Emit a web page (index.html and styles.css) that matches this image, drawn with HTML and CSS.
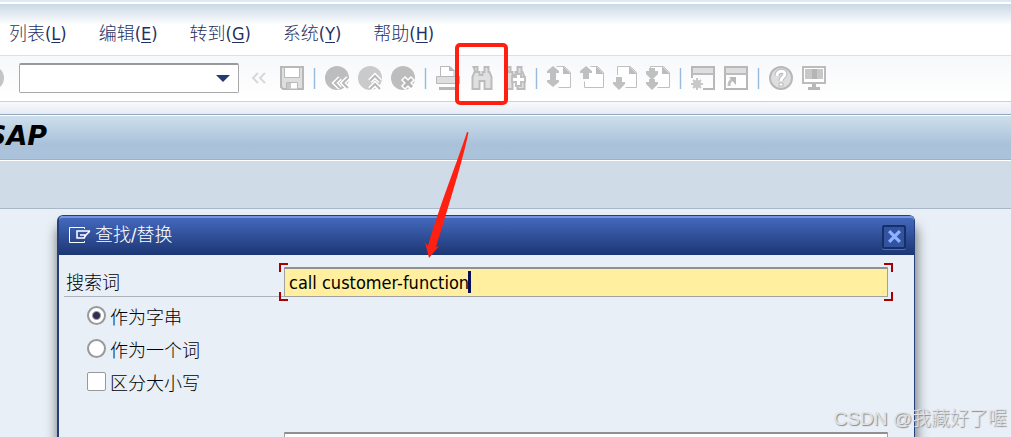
FILE: index.html
```
<!DOCTYPE html>
<html lang="zh-CN">
<head>
  <meta charset="UTF-8" />
  <meta name="viewport" content="width=device-width, initial-scale=1.0" />
  <title>SAP</title>
  <link rel="stylesheet" href="styles.css">
</head>
<body>
  <nav class="menu-bar">
    <a href="#">列表(<u>L</u>)</a>
    <a href="#">编辑(<u>E</u>)</a>
    <a href="#">转到(<u>G</u>)</a>
    <a href="#">系统(<u>Y</u>)</a>
    <a href="#">帮助(<u>H</u>)</a>
  </nav>

  <div class="toolbar">
    <button type="button" class="tool enter" aria-label="Enter">
      <svg viewBox="0 0 24 24"><circle cx="12" cy="12" r="12" fill="#c4c4c4"/></svg>
    </button>
    <div class="command">
      <select aria-label="Command"><option></option></select>
    </div>
    <button type="button" class="tool collapse" aria-label="Collapse">
      <svg viewBox="0 0 23 24"><path d="M10 7l-5 5 5 5M17 7l-5 5 5 5" fill="none" stroke="#d8d8d8" stroke-width="2"/></svg>
    </button>
    <button type="button" class="tool" aria-label="Save">
      <svg viewBox="0 0 24 24"><path d="M1 1h22v22H3l-2-2z" fill="#dedede" stroke="#b8b8b8" stroke-width="2"/><path d="M4.500 1.500h15v10h-15z" fill="#fff" stroke="#b8b8b8"/><path d="M6.500 16.500h11V23h-11z" fill="#fff" stroke="#b8b8b8"/><path d="M7 17h4v6H7z" fill="#c8c8c8"/></svg>
    </button>
    <span class="sep"></span>
    <button type="button" class="tool" aria-label="Back">
      <svg viewBox="0 0 24 24"><circle cx="12" cy="12" r="12" fill="#bdbdbd"/><path class="halo" d="M15 12l-5 5 5 5M23 12l-5 5 5 5"/><path class="mark" d="M15 12l-5 5 5 5M23 12l-5 5 5 5"/></svg>
    </button>
    <button type="button" class="tool" aria-label="Exit">
      <svg viewBox="0 0 24 24"><circle cx="12" cy="12" r="12" fill="#cacaca"/><path class="halo" d="M12 15l5-5 5 5M12 23l5-5 5 5"/><path class="mark" d="M12 15l5-5 5 5M12 23l5-5 5 5"/></svg>
    </button>
    <button type="button" class="tool" aria-label="Cancel">
      <svg viewBox="0 0 24 24"><circle cx="12" cy="12" r="12" fill="#bdbdbd"/><path d="M12 12l10 10M22 12L12 22" stroke="#fff" stroke-width="6"/><path d="M13 13l8 8M21 13l-8 8" stroke="#b5b5b5" stroke-width="3"/></svg>
    </button>
    <span class="sep"></span>
    <button type="button" class="tool" aria-label="Print">
      <svg viewBox="0 0 24 24"><path d="M4.500 10V.500H14l4 4V10" fill="#fff" stroke="#b8b8b8"/><path d="M13 0l6 5h-6z" fill="#b8b8b8"/><path d="M.500 10.500h23v7H.500z" fill="#dedede" stroke="#b8b8b8"/><path d="M3 21h18v3H3z" fill="#b8b8b8"/></svg>
    </button>
    <button type="button" class="tool" aria-label="Find">
      <svg viewBox="0 0 24 24"><path class="lens" d="M4.500 1h4v5h2v3h3V6h2V1h4v5h1l2 5v12h-7v-8h-5v8h-7V11l2-5h1z"/></svg>
    </button>
    <button type="button" class="tool" aria-label="Find next">
      <svg viewBox="0 0 24 24"><path class="lens" d="M4.500 1h4v5h2v3h3V6h2V1h4v5h1l2 5v12h-7v-8h-5v8h-7V11l2-5h1z"/><path d="M14 8h5v3h4v5h-4v4h-5v-4h-4v-5h4z" fill="#fff" stroke="#c0c0c0" stroke-width="2"/></svg>
    </button>
    <span class="sep"></span>
    <button type="button" class="tool" aria-label="First page">
      <svg viewBox="0 0 24 24"><path class="page" d="M9.500 .500h8l6 6v15h-12"/><path class="fold" d="M16 0l8 8h-8z"/><path class="arrow" d="M6 0l6 5v2H9v4H3V7H0V5zM3 11h6v3h3v2l-6 5-6-5v-2h3z"/></svg>
    </button>
    <button type="button" class="tool" aria-label="Previous page">
      <svg viewBox="0 0 24 24"><path class="page" d="M10.500 .500h7l6 6v15h-19v-6"/><path class="fold" d="M16 0l8 8h-8z"/><path class="arrow" d="M6 0l6 5v2H9v6H3V7H0V5z"/></svg>
    </button>
    <button type="button" class="tool" aria-label="Next page">
      <svg viewBox="0 0 24 24"><path class="page" d="M4.500 9V.500h13l6 6v15h-11"/><path class="fold" d="M16 0l8 8h-8z"/><path class="arrow" d="M3 11h6v5h3v2l-6 6-6-6v-2h3z"/></svg>
    </button>
    <button type="button" class="tool" aria-label="Last page">
      <svg viewBox="0 0 24 24"><path class="page" d="M4.500 3V.500h13l6 6v15h-12"/><path class="fold" d="M16 0l8 8h-8z"/><path class="arrow" d="M3 2h6v3h3v3l-5 5H5L0 8V5h3zM3 13h6v3h3v2l-6 6-6-6v-2h3z"/></svg>
    </button>
    <span class="sep"></span>
    <button type="button" class="tool" aria-label="New session">
      <svg viewBox="0 0 24 24"><path d="M1 12V1h22v22H12" fill="none" stroke="#b8b8b8" stroke-width="2"/><path d="M2 2h20v5H2z" fill="#dedede"/><path d="M1 8h22" stroke="#bcbcbc" stroke-width="2"/><path d="M6 12v12M0 18h12M2 14l8 8M10 14l-8 8" stroke="#c8c8c8" stroke-width="2"/><circle cx="6" cy="18" r="4" fill="#c8c8c8"/></svg>
    </button>
    <button type="button" class="tool" aria-label="Create shortcut">
      <svg viewBox="0 0 24 24"><path d="M1 1h22v22H1z" fill="#fff" stroke="#b8b8b8" stroke-width="2"/><path d="M2 2h20v5H2z" fill="#dedede"/><path d="M1 8h22" stroke="#bcbcbc" stroke-width="2"/><path d="M5 20c0-4 1-5 4-7" fill="none" stroke="#c0c0c0" stroke-width="3"/><path d="M5 11h7v8z" fill="#b8b8b8"/></svg>
    </button>
    <span class="sep"></span>
    <button type="button" class="tool" aria-label="Help">
      <svg viewBox="0 0 24 24"><circle cx="12" cy="12" r="11" fill="#dedede" stroke="#b8b8b8" stroke-width="2"/><path d="M8 10c0-6 8-6 8-2 0 3-4 3-4 7" fill="none" stroke="#bcbcbc" stroke-width="5"/><path d="M8 10c0-6 8-6 8-2 0 3-4 3-4 7" fill="none" stroke="#fff" stroke-width="3"/><path d="M10 17h4v3h-4z" fill="#fff" stroke="#b8b8b8"/></svg>
    </button>
    <button type="button" class="tool" aria-label="Customize layout">
      <svg viewBox="0 0 24 24"><path d="M1 1h22v16H1z" fill="#fff" stroke="#bcbcbc" stroke-width="2"/><path d="M3 3h18v10H3z" fill="#c8c8c8"/><path d="M10 3h5v10h-5z" fill="#b5b5b5"/><path d="M10 18h4v3h4v3H6v-3h4z" fill="#b8b8b8"/></svg>
    </button>
  </div>

  <header class="title-bar">
    <h1>SAP</h1>
  </header>
  <div class="app-bar"></div>

  <main>
    <form class="dialog">
      <div class="dialog-head">
        <svg class="dialog-icon" viewBox="0 0 23 18"><path d="M16.500 3V1.500h-15v15h15V15" fill="none" stroke="#fff"/><path d="M22 5H9v7h8M12 9h6l4-4M16 12l2-3" fill="none" stroke="#fff" stroke-width="1.500"/></svg>
        <h2>查找/替换</h2>
        <button type="button" class="close" aria-label="Close">
          <svg viewBox="0 0 12 12"><path d="M1 1l10 10M11 1L1 11" stroke="#8fb0ff" stroke-width="3"/></svg>
        </button>
      </div>
      <div class="dialog-body">
        <div class="field">
          <label for="term">搜索词</label>
          <div class="focus-frame">
            <input type="text" id="term" value="call customer-function">
            <span class="caret"></span>
            <i class="corner tl"></i><i class="corner tr"></i>
            <i class="corner bl"></i><i class="corner br"></i>
          </div>
        </div>
        <div class="choices">
          <label><input type="radio" name="mode" checked>作为字串</label>
          <label><input type="radio" name="mode">作为一个词</label>
          <label><input type="checkbox">区分大小写</label>
        </div>
        <div class="field second">
          <span></span>
          <input type="text" aria-label="替换">
        </div>
      </div>
    </form>
  </main>

  <div class="highlight"></div>
  <svg class="pointer" viewBox="0 0 46 128"><path d="M42 0l1.500.500C38 28 24 73 11 115l3-1-10 12L0 110l3 4C15 72 33 28 42 0z" fill="#ff2012"/></svg>
  <div class="watermark">CSDN @我藏好了喔</div>
</body>
</html>
```
FILE: styles.css
```
* {
  box-sizing: border-box;
}
body {
  margin: 0;
  height: 100vh;
  overflow: hidden;
  position: relative;
  display: flex;
  flex-direction: column;
  background: #e8eff6;
  color: #000;
  font-family: "DejaVu Sans Condensed", "Noto Sans CJK SC", sans-serif;
  font-size: 18px;
  font-weight: 300;
}
button, input, select {
  font: inherit;
  margin: 0;
}
.menu-bar {
  flex: none;
  display: flex;
  gap: 32px;
  height: 56px;
  padding: 12px 9px 0;
  border-bottom: 1px solid #dcdfe6;
  background: linear-gradient(#dfe9f5 0 2px, #fff 2px 4px, #cad8e6 4px, #fff 25px);
}
.menu-bar a {
  line-height: 43px;
  color: #1f3163;
  text-decoration: none;
}
.menu-bar u {
  text-underline-offset: 2px;
}
.toolbar {
  flex: none;
  display: flex;
  align-items: center;
  gap: 9px;
  height: 46px;
  padding-bottom: 1px;
  border-bottom: 1px solid #cbd0da;
  background: linear-gradient(#f7f8fb, #fff);
}
.tool {
  flex: none;
  width: 24px;
  height: 24px;
  padding: 0;
  border: none;
  background: none;
}
.tool svg {
  display: block;
  width: 100%;
  height: 24px;
}
.enter {
  margin-left: -20px;
  margin-right: 6px;
}
.collapse {
  width: 23px;
}
.lens {
  fill: #e0e0e0;
  stroke: #bcbcbc;
  stroke-width: 2;
}
.halo, .mark {
  fill: none;
  stroke: #fff;
  stroke-width: 5;
}
.mark {
  stroke: #b8b8b8;
  stroke-width: 2;
}
.page {
  fill: #fff;
  stroke: #c0c0c0;
  stroke-width: 1;
}
.fold {
  fill: #bcbcbc;
}
.arrow {
  fill: #c0c0c0;
}
.command {
  flex: none;
  position: relative;
  width: 220px;
}
.command select {
  display: block;
  width: 100%;
  height: 30px;
  appearance: none;
  border: 1px solid #a8a8a8;
  border-top: 2px solid #999;
  border-radius: 2px;
  background: #fff;
}
.command::after {
  content: "";
  position: absolute;
  right: 9px;
  top: 12px;
  border: 7px solid transparent;
  border-top-color: #243a70;
  border-bottom: none;
  pointer-events: none;
}
.sep {
  flex: none;
  width: 3px;
  height: 21px;
  border-left: 1px solid #e4eef7;
  border-right: 1px solid #e4eef7;
  background: #98bbdb;
}
.title-bar {
  flex: none;
  height: 58px;
  padding-top: 12px;
  border-bottom: 1px solid #9fb0c4;
  background: linear-gradient(#f8f9fc 0, #e6ebf4 12px, #93a8bf 12px 13px, #fff 13px 14px, #cfdfeb 14px, #a9c2da 42px, #abc3da);
}
.title-bar h1 {
  margin: 0 0 0 -13px;
  font-family: "DejaVu Sans", sans-serif;
  font-size: 27px;
  line-height: 44px;
  font-weight: bold;
  font-style: italic;
}
.app-bar {
  flex: none;
  height: 49px;
  border-top: 1px solid #fff;
  border-bottom: 1px solid #a8b8c8;
  background: #cfdce7;
}
main {
  flex: 1;
  display: flex;
  min-height: 0;
  overflow: hidden;
  padding: 6px 96px 0 57px;
}
.dialog {
  flex: 1;
  border: 2px solid #253e7c;
  border-width: 1px 1px 0 2px;
  border-radius: 6px 6px 0 0;
  background: #e8eff6;
  box-shadow: 1px 12px 12px 1px rgba(0, 0, 0, .5);
}
.dialog-head {
  display: flex;
  align-items: center;
  gap: 4px;
  height: 39px;
  padding: 0 8px 0 9px;
  border-top: 2px solid #7398d8;
  border-radius: 4px 4px 0 0;
  background: linear-gradient(#4468bd, #1c3673);
}
.dialog-icon {
  width: 23px;
  height: 18px;
  margin-bottom: 4px;
}
.dialog h2 {
  flex: 1;
  margin: 0;
  font-size: 18px;
  font-weight: 300;
  line-height: 33px;
  padding-bottom: 4px;
  color: #fff;
}
.close {
  display: grid;
  place-items: center;
  width: 24px;
  height: 24px;
  padding: 0;
  border: 2px solid #182f66;
  border-radius: 2px;
  background: #3153a0;
  box-shadow: 0 1px #4b6eb4;
}
.close svg {
  width: 13px;
  height: 13px;
}
.dialog-body {
  padding: 12px 26px 0 5px;
}
.field {
  display: grid;
  grid-template-columns: 220px 1fr;
}
.field label {
  height: 30px;
  padding-left: 2px;
  line-height: 32px;
  border-bottom: 1px solid #adb3b8;
}
.field input {
  display: block;
  width: 100%;
  height: 30px;
  padding: 0 4px;
  border: 1px solid #a0a0a0;
  border-top: 2px solid #909090;
  border-radius: 1px;
  outline: none;
  background: #fff;
}
.focus-frame {
  position: relative;
  height: 31px;
}
.field #term {
  background: #ffef9e;
}
.caret {
  position: absolute;
  left: 184px;
  top: 4px;
  width: 3px;
  height: 22px;
  background: #06105a;
}
.corner {
  position: absolute;
  width: 9px;
  height: 9px;
  border: 0 solid #a80000;
}
.tl {
  left: -5px;
  top: -4px;
  border-width: 2px 0 0 2px;
}
.tr {
  right: -5px;
  top: -4px;
  border-width: 2px 2px 0 0;
}
.bl {
  left: -5px;
  bottom: -3px;
  border-width: 0 0 2px 2px;
}
.br {
  right: -5px;
  bottom: -3px;
  border-width: 0 2px 2px 0;
}
.choices {
  display: flex;
  flex-direction: column;
  align-items: flex-start;
  padding: 1px 0 0 23px;
}
.choices label {
  display: flex;
  align-items: center;
  gap: 4px;
  height: 33px;
}
.choices input {
  appearance: none;
  width: 19px;
  height: 19px;
  border: 2px solid #999;
  border-radius: 50%;
  background: #fff;
}
.choices input:checked {
  background: radial-gradient(circle, #33304d 3px, #fff 5px);
}
.choices input[type="checkbox"] {
  border-width: 1px;
  border-radius: 2px;
}
.second {
  margin-top: 34px;
}
.highlight {
  position: absolute;
  left: 455px;
  top: 43px;
  width: 53px;
  height: 62px;
  border: 4px solid #ff2012;
  border-radius: 5px;
}
.pointer {
  position: absolute;
  left: 425px;
  top: 132px;
  width: 46px;
  height: 128px;
}
.watermark {
  position: absolute;
  right: 4px;
  bottom: 3px;
  font-family: "Liberation Sans", "Noto Sans CJK SC", sans-serif;
  font-size: 19px;
  line-height: 30px;
  color: #dfe3e8;
  text-shadow: 1px 1px 1px #888;
}
```
